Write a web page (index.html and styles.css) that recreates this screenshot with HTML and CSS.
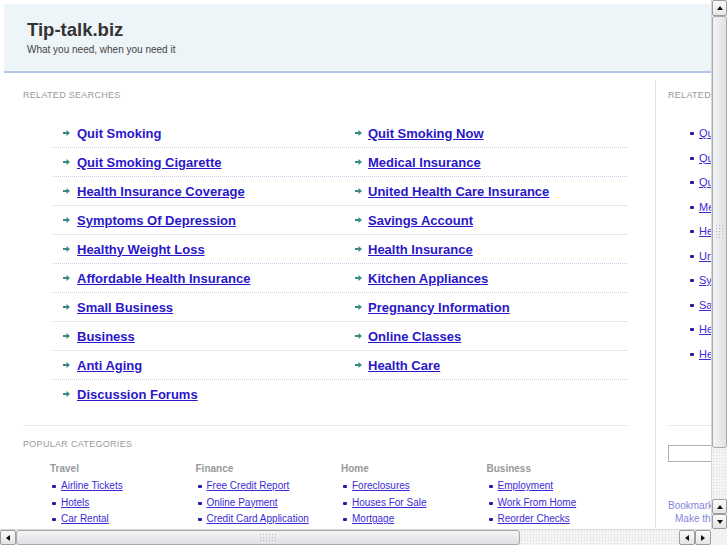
FILE: index.html
```html
<!DOCTYPE html>
<html lang="en">
<head>
  <meta charset="UTF-8">
  <title>Tip-talk.biz</title>
  <link rel="stylesheet" href="styles.css">
</head>
<body>
  <div class="window">
    <div class="viewport">
      <div class="page">
        <div class="header">
          <h1>Tip-talk.biz</h1>
          <p>What you need, when you need it</p>
        </div>
        <div class="main">
          <div class="content">
            <h2>Related Searches</h2>
            <div class="searches">
              <div class="row">
                <div class="cell"><i class="arr"></i><a class="plain" href="#">Quit Smoking</a></div>
                <div class="cell"><i class="arr"></i><a href="#">Quit Smoking Now</a></div>
              </div>
              <div class="row">
                <div class="cell"><i class="arr"></i><a href="#">Quit Smoking Cigarette</a></div>
                <div class="cell"><i class="arr"></i><a href="#">Medical Insurance</a></div>
              </div>
              <div class="row">
                <div class="cell"><i class="arr"></i><a href="#">Health Insurance Coverage</a></div>
                <div class="cell"><i class="arr"></i><a href="#">United Health Care Insurance</a></div>
              </div>
              <div class="row">
                <div class="cell"><i class="arr"></i><a href="#">Symptoms Of Depression</a></div>
                <div class="cell"><i class="arr"></i><a href="#">Savings Account</a></div>
              </div>
              <div class="row">
                <div class="cell"><i class="arr"></i><a href="#">Healthy Weight Loss</a></div>
                <div class="cell"><i class="arr"></i><a href="#">Health Insurance</a></div>
              </div>
              <div class="row">
                <div class="cell"><i class="arr"></i><a href="#">Affordable Health Insurance</a></div>
                <div class="cell"><i class="arr"></i><a href="#">Kitchen Appliances</a></div>
              </div>
              <div class="row">
                <div class="cell"><i class="arr"></i><a href="#">Small Business</a></div>
                <div class="cell"><i class="arr"></i><a href="#">Pregnancy Information</a></div>
              </div>
              <div class="row">
                <div class="cell"><i class="arr"></i><a href="#">Business</a></div>
                <div class="cell"><i class="arr"></i><a href="#">Online Classes</a></div>
              </div>
              <div class="row">
                <div class="cell"><i class="arr"></i><a href="#">Anti Aging</a></div>
                <div class="cell"><i class="arr"></i><a href="#">Health Care</a></div>
              </div>
              <div class="row last">
                <div class="cell"><i class="arr"></i><a href="#">Discussion Forums</a></div>
              </div>
            </div>
            <div class="sep"></div>
            <h2 class="pop">Popular Categories</h2>
            <div class="cats">
              <div class="cat">
                <h3>Travel</h3>
                <ul>
                  <li><a href="#">Airline Tickets</a></li>
                  <li><a href="#">Hotels</a></li>
                  <li><a href="#">Car Rental</a></li>
                </ul>
              </div>
              <div class="cat">
                <h3>Finance</h3>
                <ul>
                  <li><a href="#">Free Credit Report</a></li>
                  <li><a href="#">Online Payment</a></li>
                  <li><a href="#">Credit Card Application</a></li>
                </ul>
              </div>
              <div class="cat">
                <h3>Home</h3>
                <ul>
                  <li><a href="#">Foreclosures</a></li>
                  <li><a href="#">Houses For Sale</a></li>
                  <li><a href="#">Mortgage</a></li>
                </ul>
              </div>
              <div class="cat">
                <h3>Business</h3>
                <ul>
                  <li><a href="#">Employment</a></li>
                  <li><a href="#">Work From Home</a></li>
                  <li><a href="#">Reorder Checks</a></li>
                </ul>
              </div>
            </div>
          </div>
          <div class="side">
            <h2>Related Searches</h2>
            <ul class="side_list">
              <li><a href="#">Quit Smoking</a></li>
              <li><a href="#">Quit Smoking Now</a></li>
              <li><a href="#">Quit Smoking Cigarette</a></li>
              <li><a href="#">Medical Insurance</a></li>
              <li><a href="#">Health Insurance Coverage</a></li>
              <li><a href="#">United Health Care Insurance</a></li>
              <li><a href="#">Symptoms Of Depression</a></li>
              <li><a href="#">Savings Account</a></li>
              <li><a href="#">Healthy Weight Loss</a></li>
              <li><a href="#">Health Insurance</a></li>
            </ul>
            <div class="side_sep"></div>
            <input class="search" type="text">
            <div class="bookmark">
              <a href="#">Bookmark this page</a>
              <a class="home" href="#">Make this your homepage</a>
            </div>
          </div>
        </div>
      </div>
    </div>
    <div class="vscroll">
      <div class="sbtn"><i class="up"></i></div>
      <div class="vthumb"><span class="grip"></span></div>
      <div class="track"></div>
      <div class="sbtn"><i class="up"></i></div>
      <div class="sbtn"><i class="down"></i></div>
    </div>
    <div class="hscroll">
      <div class="sbtn"><i class="left"></i></div>
      <div class="hthumb"><span class="grip"></span></div>
      <div class="track"></div>
      <div class="sbtn"><i class="left"></i></div>
      <div class="sbtn"><i class="right"></i></div>
    </div>
    <div class="corner"></div>
  </div>
</body>
</html>
```

FILE: styles.css
```css
body {
  margin: 0;
  font-family: "Liberation Sans", Arial, sans-serif;
  background: #fff;
}
.window {
  width: 727px;
  height: 545px;
  display: grid;
  grid-template-columns: 711px 16px;
  grid-template-rows: 529px 16px;
  overflow: hidden;
}
.viewport {
  overflow: hidden;
}
.page {
  width: 900px;
  padding: 4px 0 0 4px;
}

/* header */
.header {
  height: 67px;
  background-color: #eef5f8;
  border-bottom: 2px solid #b3c6ea;
  padding-left: 23px;
}
.header h1 {
  margin: 0;
  padding-top: 15px;
  font-size: 18.5px;
  line-height: 22px;
  color: #333;
}
.header p {
  margin: 2px 0 0;
  font-size: 10px;
  line-height: 14px;
  color: #444;
}

/* columns */
.main {
  display: flex;
  padding-top: 7px;
}
.content {
  width: 604px;
  flex: none;
  padding-left: 19px;
}
.side {
  width: 200px;
  flex: none;
  margin-left: 28px;
  border-left: 1px solid #d8e2f2;
  padding-left: 12px;
}
h2 {
  margin: 0;
  padding-top: 10px;
  font-size: 9px;
  line-height: 11px;
  font-weight: normal;
  text-transform: uppercase;
  letter-spacing: 0.3px;
  color: #999;
}

/* related searches */
.searches {
  margin: 18px 0 0 29px;
  width: 575px;
}
.row {
  display: flex;
  height: 28px;
  border-bottom: 1px dotted #bfd1e8;
}
.row.last {
  border-bottom: 0;
}
.cell {
  box-sizing: border-box;
  width: 303px;
  flex: none;
  padding-left: 11px;
  display: flex;
  align-items: center;
}
.cell + .cell {
  width: 272px;
  padding-left: 0;
}
.cell a {
  font-size: 13px;
  font-weight: bold;
  color: #2a17c9;
  margin-left: 7px;
}
.cell + .cell a {
  margin-left: 6px;
}
.cell a.plain {
  text-decoration: none;
}
.arr {
  display: block;
  width: 7px;
  height: 6px;
  background: url("data:image/svg+xml,%3Csvg xmlns='http://www.w3.org/2000/svg' width='7' height='6'%3E%3Cpath d='M0 2h3.5V0L7 3 3.5 6V4H0z' fill='%23368c84'/%3E%3C/svg%3E") no-repeat;
}
.sep {
  margin-top: 17px;
  height: 1px;
  background-color: #e0e8f1;
}
h2.pop {
  padding-top: 13px;
}

/* categories */
.cats {
  display: flex;
  margin: 13px 0 0 27px;
}
.cat {
  width: 145.5px;
  flex: none;
}
.cat h3 {
  margin: 0;
  font-size: 10px;
  line-height: 12px;
  color: #999;
}
.cat ul {
  list-style: none;
  margin: 3px 0 0;
  padding: 0;
}
.cat li,
.side_list li {
  position: relative;
  padding-left: 11px;
  font-size: 10px;
  line-height: 16.5px;
}
.cat li::before,
.side_list li::before {
  content: "";
  position: absolute;
  left: 2px;
  top: 7px;
  width: 4px;
  height: 3px;
  border-radius: 1px;
  background-color: #2a1a9e;
}
.cat a,
.side_list a {
  color: #3b2bd6;
}

/* side column */
.side_list {
  list-style: none;
  margin: 20px 0 0 22px;
  padding: 0;
}
.side_list li {
  padding-left: 9px;
  font-size: 11px;
  line-height: 24.5px;
}
.side_list li::before {
  left: 0;
  top: 11px;
}
.side_sep {
  margin-top: 59px;
  height: 1px;
  background-color: #e0e8f1;
}
.search {
  display: block;
  margin: 19px 0 0;
  width: 160px;
  height: 17px;
  box-sizing: border-box;
  border: 1px solid #b0b0b0;
  padding: 0;
}
.bookmark {
  margin-top: 37px;
  font-size: 10px;
  line-height: 13px;
}
.bookmark a {
  display: block;
  color: #8585de;
  text-decoration: none;
}
.bookmark a.home {
  padding-left: 7px;
}

/* scrollbars */
.vscroll,
.hscroll {
  display: flex;
  background-color: #f2f2f2;
}
.vscroll {
  flex-direction: column;
  border-left: 1px solid #d6d6d6;
}
.hscroll {
  border-top: 1px solid #d6d6d6;
}
.track {
  flex: 1;
  background-color: #f4f4f4;
  background-image: radial-gradient(#d8d8d8 0.6px, transparent 0.8px);
  background-size: 3px 3px;
}
.sbtn {
  width: 14px;
  height: 13px;
  flex: none;
  border: 1px solid #9d9d9d;
  border-radius: 2px;
  background: linear-gradient(#fbfbfb, #e4e4e4);
  display: flex;
  align-items: center;
  justify-content: center;
}
.vscroll .sbtn {
  width: 13px;
}
.vscroll .sbtn:first-child {
  height: 14px;
}
.vthumb,
.hthumb {
  flex: none;
  border: 1px solid #a8a8a8;
  border-radius: 3px;
  display: flex;
  align-items: center;
  justify-content: center;
}
.vthumb {
  height: 430px;
  background: linear-gradient(90deg, #f3f4f6, #dfe1e5);
}
.hthumb {
  width: 502px;
  background: linear-gradient(#f3f4f6, #dfe1e5);
}
.grip {
  display: block;
  width: 10px;
  height: 16px;
  background-image: radial-gradient(#b8b8b8 0.6px, transparent 0.9px);
  background-size: 3px 3px;
}
.hthumb .grip {
  width: 18px;
  height: 10px;
}
.up,
.down,
.left,
.right {
  display: block;
  width: 0;
  height: 0;
  border: 3px solid transparent;
}
.up {
  border-bottom: 4px solid #111;
  border-top: 0;
}
.down {
  border-top: 4px solid #111;
  border-bottom: 0;
}
.left {
  border-right: 4px solid #111;
  border-left: 0;
}
.right {
  border-left: 4px solid #111;
  border-right: 0;
}
.corner {
  background-color: #f2f2f2;
}
```
